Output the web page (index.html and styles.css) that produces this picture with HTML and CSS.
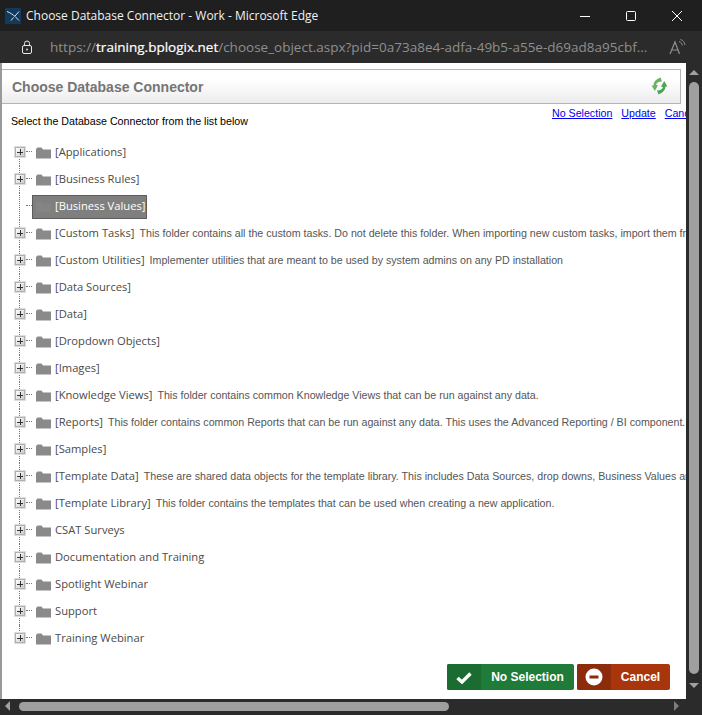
FILE: index.html
```html
<!DOCTYPE html>
<html lang="en">
<head>
<meta charset="utf-8">
<title>Choose Database Connector</title>
<link rel="stylesheet" href="styles.css">
</head>
<body>
<div class="window">
  <header class="titlebar">
    <svg class="app-icon" width="16" height="16" viewBox="0 0 16 16"><rect width="16" height="16" fill="#123a5c"/><path d="M2 3.500 C6 5 8 7 10 8.500 L14 12.500 M10 8 L14 3.500 M8.500 9.500 L6 12.500" fill="none" stroke="#dfe8f0" stroke-width="1"/></svg>
    <span class="title-text">Choose Database Connector - Work - Microsoft Edge</span>
    <div class="window-controls">
      <svg width="12" height="12" viewBox="0 0 12 12"><path d="M1 6.500H11" stroke="#fff" stroke-width="1"/></svg>
      <svg width="12" height="12" viewBox="0 0 12 12"><rect x="1.500" y="1.500" width="9" height="9" rx="1" fill="none" stroke="#fff"/></svg>
      <svg width="12" height="12" viewBox="0 0 12 12"><path d="M1 1L11 11M11 1L1 11" stroke="#fff" stroke-width="1"/></svg>
    </div>
  </header>
  <div class="addressbar">
    <svg class="lock" width="12" height="15" viewBox="0 0 12 15"><rect x="1.500" y="5.500" width="9" height="8" rx="1.500" fill="none" stroke="#e8e8e8"/><path d="M3.500 5.500V3.500a2.500 2.500 0 0 1 5 0V5.500" fill="none" stroke="#e8e8e8"/><rect x="5.200" y="8.700" width="1.600" height="1.600" fill="#e8e8e8"/></svg>
    <div class="url"><span>https://</span><b>training.bplogix.net</b><span>/choose_object.aspx?pid=0a73a8e4-adfa-49b5-a55e-d69ad8a95cbf...</span></div>
    <svg class="read-aloud" width="17" height="16" viewBox="0 0 17 16"><path d="M1 15L6 3L10.500 15M2.800 11H9" fill="none" stroke="#8f8f8f" stroke-width="1.200"/><path d="M10 2.500C12 3 13 4.500 13.300 6.500M11.500 .5C14 1.200 15.600 3.300 16 6" fill="none" stroke="#8f8f8f"/></svg>
  </div>
  <div class="page-row">
    <main class="page">
      <div class="dialog-frame">
        <div class="dialog-head">
          <h1 class="dialog-title">Choose Database Connector</h1>
          <svg class="refresh" width="17" height="18" viewBox="0 0 17 18"><path d="M9.500 .5L11 4.500C8.800 4.300 5.800 5 5 8L7 8.200L3.800 14L.6 8.600L2.500 8.400C2.800 4 6 1.800 9.500 .5Z" fill="#6cb168"/><path d="M7.500 17.500L6 13.500C8.200 13.700 11.200 13 12 10L10 9.800L13.200 4L16.400 9.400L14.500 9.600C14.200 14 11 16.200 7.500 17.500Z" fill="#4fa356"/></svg>
        </div>
      </div>
      <div class="intro">
        <p class="intro-text">Select the Database Connector from the list below</p>
        <nav class="links"><a href="#">No Selection</a><a href="#">Update</a><a href="#">Cancel</a></nav>
      </div>
      <ul class="tree">
        <li class="row"><i class="toggle"></i><svg class="folder"><use href="#f"/></svg><span class="name">[Applications]</span></li>
        <li class="row"><i class="toggle"></i><svg class="folder"><use href="#f"/></svg><span class="name">[Business Rules]</span></li>
        <li class="row leaf"><i class="toggle"></i><div class="selected"><svg class="folder"><use href="#f"/></svg><span class="name">[Business Values]</span></div></li>
        <li class="row"><i class="toggle"></i><svg class="folder"><use href="#f"/></svg><span class="name">[Custom Tasks]</span><span class="desc">This folder contains all the custom tasks. Do not delete this folder. When importing new custom tasks, import them from the Process Director installation.</span></li>
        <li class="row"><i class="toggle"></i><svg class="folder"><use href="#f"/></svg><span class="name">[Custom Utilities]</span><span class="desc">Implementer utilities that are meant to be used by system admins on any PD installation</span></li>
        <li class="row"><i class="toggle"></i><svg class="folder"><use href="#f"/></svg><span class="name">[Data Sources]</span></li>
        <li class="row"><i class="toggle"></i><svg class="folder"><use href="#f"/></svg><span class="name">[Data]</span></li>
        <li class="row"><i class="toggle"></i><svg class="folder"><use href="#f"/></svg><span class="name">[Dropdown Objects]</span></li>
        <li class="row"><i class="toggle"></i><svg class="folder"><use href="#f"/></svg><span class="name">[Images]</span></li>
        <li class="row"><i class="toggle"></i><svg class="folder"><use href="#f"/></svg><span class="name">[Knowledge Views]</span><span class="desc">This folder contains common Knowledge Views that can be run against any data.</span></li>
        <li class="row"><i class="toggle"></i><svg class="folder"><use href="#f"/></svg><span class="name">[Reports]</span><span class="desc">This folder contains common Reports that can be run against any data. This uses the Advanced Reporting / BI component.</span></li>
        <li class="row"><i class="toggle"></i><svg class="folder"><use href="#f"/></svg><span class="name">[Samples]</span></li>
        <li class="row"><i class="toggle"></i><svg class="folder"><use href="#f"/></svg><span class="name">[Template Data]</span><span class="desc">These are shared data objects for the template library. This includes Data Sources, drop downs, Business Values and more.</span></li>
        <li class="row"><i class="toggle"></i><svg class="folder"><use href="#f"/></svg><span class="name">[Template Library]</span><span class="desc">This folder contains the templates that can be used when creating a new application.</span></li>
        <li class="row"><i class="toggle"></i><svg class="folder"><use href="#f"/></svg><span class="name">CSAT Surveys</span></li>
        <li class="row"><i class="toggle"></i><svg class="folder"><use href="#f"/></svg><span class="name">Documentation and Training</span></li>
        <li class="row"><i class="toggle"></i><svg class="folder"><use href="#f"/></svg><span class="name">Spotlight Webinar</span></li>
        <li class="row"><i class="toggle"></i><svg class="folder"><use href="#f"/></svg><span class="name">Support</span></li>
        <li class="row last"><i class="toggle"></i><svg class="folder"><use href="#f"/></svg><span class="name">Training Webinar</span></li>
      </ul>
      <div class="actions">
        <button class="btn btn-ok"><span class="btn-icon"><svg width="16" height="13" viewBox="0 0 16 13"><path d="M1.500 7L6 11L14.500 2.500" fill="none" stroke="#fff" stroke-width="3.400"/></svg></span><span class="btn-label">No Selection</span></button>
        <button class="btn btn-cancel"><span class="btn-icon"><svg width="18" height="18" viewBox="0 0 18 18"><circle cx="9" cy="9" r="8.500" fill="#fff"/><rect x="4.500" y="7.500" width="9" height="3" fill="#8c2c0b"/></svg></span><span class="btn-label">Cancel</span></button>
      </div>
    </main>
    <div class="vscroll">
      <i class="arrow-up"></i>
      <div class="vthumb"></div>
      <i class="arrow-down"></i>
    </div>
  </div>
  <div class="hscroll">
    <i class="arrow-left"></i>
    <div class="hthumb"></div>
    <i class="arrow-right"></i>
  </div>
</div>
<svg class="defs" width="0" height="0"><symbol id="f" viewBox="0 0 15 12"><path d="M0 2V11.500H15V2.500H7L5.500 .5H1.500Z" fill="#8a8a8a"/></symbol></svg>
</body>
</html>
```
FILE: styles.css
```css
html, body { margin: 0; padding: 0; height: 100%; overflow: hidden; }
body { font-family: "Liberation Sans", Arial, sans-serif; background: #2b2b2b; }
.defs { position: absolute; }
.window { width: 702px; height: 715px; display: flex; flex-direction: column; background: #2b2b2b; }

.titlebar { height: 31px; flex: none; background: #1f1f1f; display: flex; align-items: center; padding-left: 5px; box-sizing: border-box; }
.app-icon { flex: none; }
.title-text { margin-left: 5px; color: #f2f2f2; font: 12px "Open Sans", "Noto Sans", sans-serif; white-space: nowrap; }
.window-controls { margin-left: auto; display: flex; gap: 34px; padding-right: 19px; }

.addressbar { height: 32px; flex: none; background: #2b2b2b; display: flex; align-items: center; padding: 0 16px 0 21px; box-sizing: border-box; }
.lock { flex: none; }
.url { margin-left: 17px; width: 600px; font: 13.5px "Open Sans", "Noto Sans", sans-serif; color: #8f8f8f; white-space: nowrap; overflow: hidden; }
.url b { font-weight: 400; color: #fff; -webkit-text-stroke: .2px #fff; }
.read-aloud { margin-left: auto; flex: none; }

.page-row { flex: 1; min-height: 0; display: flex; }
.page { width: 686px; background: #fff; overflow: hidden; flex: none; display: flex; flex-direction: column; border-left: 2px solid #9a9a9a; box-sizing: border-box; }
.dialog-frame { margin-top: 6px; width: 679px; flex: none; border-top: 1px solid #b4b4b4; border-right: 1px solid #b4b4b4; box-sizing: border-box; }
.dialog-head { height: 34px; box-sizing: border-box; display: flex; align-items: center; justify-content: space-between; padding: 0 12px 0 10px; background: linear-gradient(#fff 30%, #ececec); border-bottom: 1px solid #b4b4b4; }
.dialog-title { margin: 0; font: bold 14px "Liberation Sans", Arial, sans-serif; color: #757575; }
.refresh { flex: none; margin-top: -2px; }

.intro { flex: none; display: flex; height: 35px; padding-left: 9px; width: 900px; box-sizing: border-box; }
.intro-text { margin: 11px 0 0; font-size: 10.67px; line-height: 12px; color: #000; white-space: nowrap; }
.links { margin-left: 304px; margin-top: 3px; display: flex; gap: 9px; font-size: 10.67px; line-height: 12px; }
.links a { color: #0000ee; }

.tree { list-style: none; margin: 0; padding: 0; flex: none; }
.row { height: 27px; display: flex; align-items: center; white-space: nowrap; position: relative; padding-left: 13px; }
.row::before { content: ""; position: absolute; left: 17px; top: 0; bottom: 0; border-left: 1px dotted #777; }
.row:first-child::before { top: 13px; }
.row.last::before { bottom: 13px; }
.toggle { width: 8px; height: 8px; flex: none; border: 1px solid #b0b0b0; outline: 1px solid #ddd; position: relative; z-index: 1; margin: -1px 11px 0 0;
  background-image: linear-gradient(#333, #333), linear-gradient(#333, #333), linear-gradient(135deg, #fff, #ccc);
  background-size: 6px 1px, 1px 6px, 100% 100%; background-position: center, center, 0 0; background-repeat: no-repeat; }
.toggle::after { content: ""; position: absolute; left: 10px; top: 3px; width: 6px; border-top: 1px dotted #777; }
.folder { width: 15px; height: 12px; flex: none; margin-top: 1px; }
.name { margin-left: 4px; font: 11.2px "Open Sans", "Noto Sans", sans-serif; color: #4a4a4a; position: relative; top: -1px; }
.desc { margin-left: 5px; font-size: 10.67px; color: #555; position: relative; top: -1px; }
.leaf .toggle { background: none; border-color: transparent; outline: 0; }
.selected { display: flex; align-items: center; height: 24px; box-sizing: border-box; width: 115px; margin-left: -4px; padding-left: 3px; background: #7f7f7f; border: 1px solid #5c5c5c; }
.selected .name { color: #fff; }
.selected .folder { opacity: .5; }

.actions { flex: none; display: flex; gap: 3px; margin-top: 12px; padding-left: 445px; }
.btn { height: 26px; border: 0; padding: 0; border-radius: 2px; display: flex; align-items: center; color: #fff; font: bold 12px "Liberation Sans", Arial, sans-serif; overflow: hidden; }
.btn-icon { height: 100%; display: flex; align-items: center; justify-content: center; flex: none; }
.btn-label { flex: 1; text-align: center; }
.btn-ok { width: 127px; background: #1f7b38; }
.btn-ok .btn-icon { width: 34px; background: #1b6c31; }
.btn-cancel { width: 93px; background: #a8350c; }
.btn-cancel .btn-icon { width: 34px; background: #8c2c0b; }

.vscroll { flex: 1; position: relative; display: flex; flex-direction: column; align-items: center; background: #2b2b2b; padding-top: 7px; box-sizing: border-box; }
.arrow-up { width: 0; height: 0; border: 5px solid transparent; border-top: 0; border-bottom: 5px solid #a0a0a0; margin-bottom: 7px; }
.vthumb { width: 10px; height: 592px; background: #9f9f9f; border-radius: 5px; }
.arrow-down { width: 0; height: 0; border: 5px solid transparent; border-bottom: 0; border-top: 5px solid #a0a0a0; margin-top: 9px; }

.hscroll { height: 16px; flex: none; background: #2b2b2b; display: flex; align-items: center; padding: 0 0 2px 5px; box-sizing: border-box; }
.arrow-left { width: 0; height: 0; border: 5px solid transparent; border-left: 0; border-right: 5px solid #a0a0a0; }
.hthumb { width: 430px; height: 9px; margin-left: 9px; background: #9f9f9f; border-radius: 5px; }
.arrow-right { width: 0; height: 0; border: 5px solid transparent; border-right: 0; border-left: 5px solid #7d7d7d; margin-left: 225px; }
```
